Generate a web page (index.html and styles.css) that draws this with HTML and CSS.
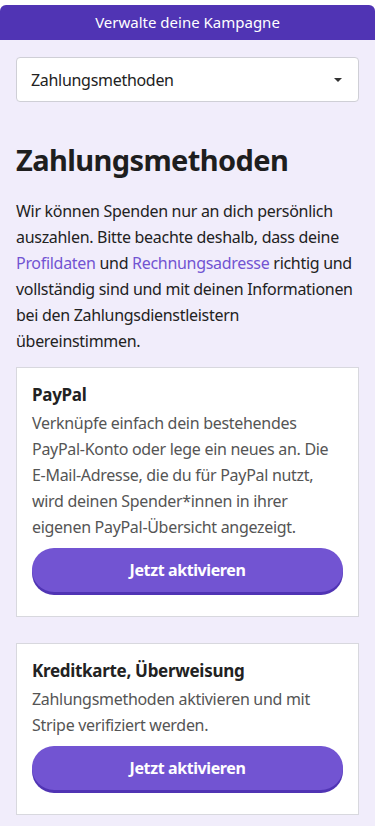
FILE: index.html
```html
<!DOCTYPE html>
<html lang="de">
<head>
    <meta charset="UTF-8">
    <meta name="viewport" content="width=device-width, initial-scale=1.0">
    <title>Zahlungsmethoden</title>
    <link rel="stylesheet" href="styles.css">
</head>
<body>
    <div class="page">
        <header class="topbar">Verwalte deine Kampagne</header>
        <div class="content">
            <div class="select">
                <span>Zahlungsmethoden</span>
                <span class="caret"></span>
            </div>
            <h1>Zahlungsmethoden</h1>
            <p class="intro">Wir können Spenden nur an dich persönlich auszahlen. Bitte beachte deshalb, dass deine <a href="#">Profildaten</a> und <a href="#">Rechnungsadresse</a> richtig und vollständig sind und mit deinen Informationen bei den Zahlungsdienstleistern übereinstimmen.</p>
            <div class="card">
                <h3>PayPal</h3>
                <p>Verknüpfe einfach dein bestehendes PayPal-Konto oder lege ein neues an. Die E-Mail-Adresse, die du für PayPal nutzt, wird deinen Spender*innen in ihrer eigenen PayPal-Übersicht angezeigt.</p>
                <button class="activate">Jetzt aktivieren</button>
            </div>
            <div class="card">
                <h3>Kreditkarte, Überweisung</h3>
                <p>Zahlungsmethoden aktivieren und mit Stripe verifiziert werden.</p>
                <button class="activate">Jetzt aktivieren</button>
            </div>
        </div>
    </div>
</body>
</html>
```

FILE: styles.css
```css
body {
    margin: 0;
    padding: 5px 0 0;
    background-color: #fff;
    font-family: "Noto Sans", "Open Sans", sans-serif;
    color: #222;
}
.page {
    background-color: #f1edfb;
    border-radius: 6px 6px 0 0;
    min-height: 821px;
}
.topbar {
    background-color: #5034b4;
    color: white;
    height: 35px;
    line-height: 34px;
    text-align: center;
    font-size: 15px;
    border-radius: 6px 6px 0 0;
}
.content {
    padding: 17px 16px 12px;
}
.select {
    background-color: white;
    border: 1px solid #cfcfd6;
    border-radius: 4px;
    height: 43px;
    display: flex;
    align-items: center;
    justify-content: space-between;
    padding: 0 14px;
    font-size: 16px;
    letter-spacing: -0.3px;
    color: #222;
}
.caret {
    width: 0;
    height: 0;
    border-left: 4px solid transparent;
    border-right: 4px solid transparent;
    border-top: 4px solid #333;
    margin-right: 2px;
}
h1 {
    font-size: 29px;
    font-weight: 700;
    letter-spacing: -0.6px;
    margin: 38px 0 18px;
    line-height: 40px;
    color: #1e1e1e;
}
.intro {
    font-size: 16px;
    line-height: 26px;
    letter-spacing: -0.3px;
    margin: 0 0 13px;
    color: #222;
}
.intro a {
    color: #7254d2;
    text-decoration: none;
}
.card {
    background-color: white;
    border: 1px solid #d8d8de;
    padding: 14px 15px 24px;
    margin-bottom: 26px;
}
.card h3 {
    font-size: 17px;
    font-weight: 700;
    letter-spacing: -0.3px;
    margin: 0 0 2px;
    line-height: 26px;
    color: #222;
}
.card p {
    font-size: 16px;
    line-height: 26px;
    letter-spacing: -0.3px;
    color: #555;
    margin: 0 0 8px;
}
.activate {
    display: block;
    width: 100%;
    height: 44px;
    border: none;
    border-radius: 22px;
    background-color: #7254d2;
    box-shadow: 0 3px 0 #5034b4;
    color: white;
    font-family: inherit;
    font-size: 16px;
    font-weight: 700;
    letter-spacing: -0.4px;
    cursor: pointer;
}
```
